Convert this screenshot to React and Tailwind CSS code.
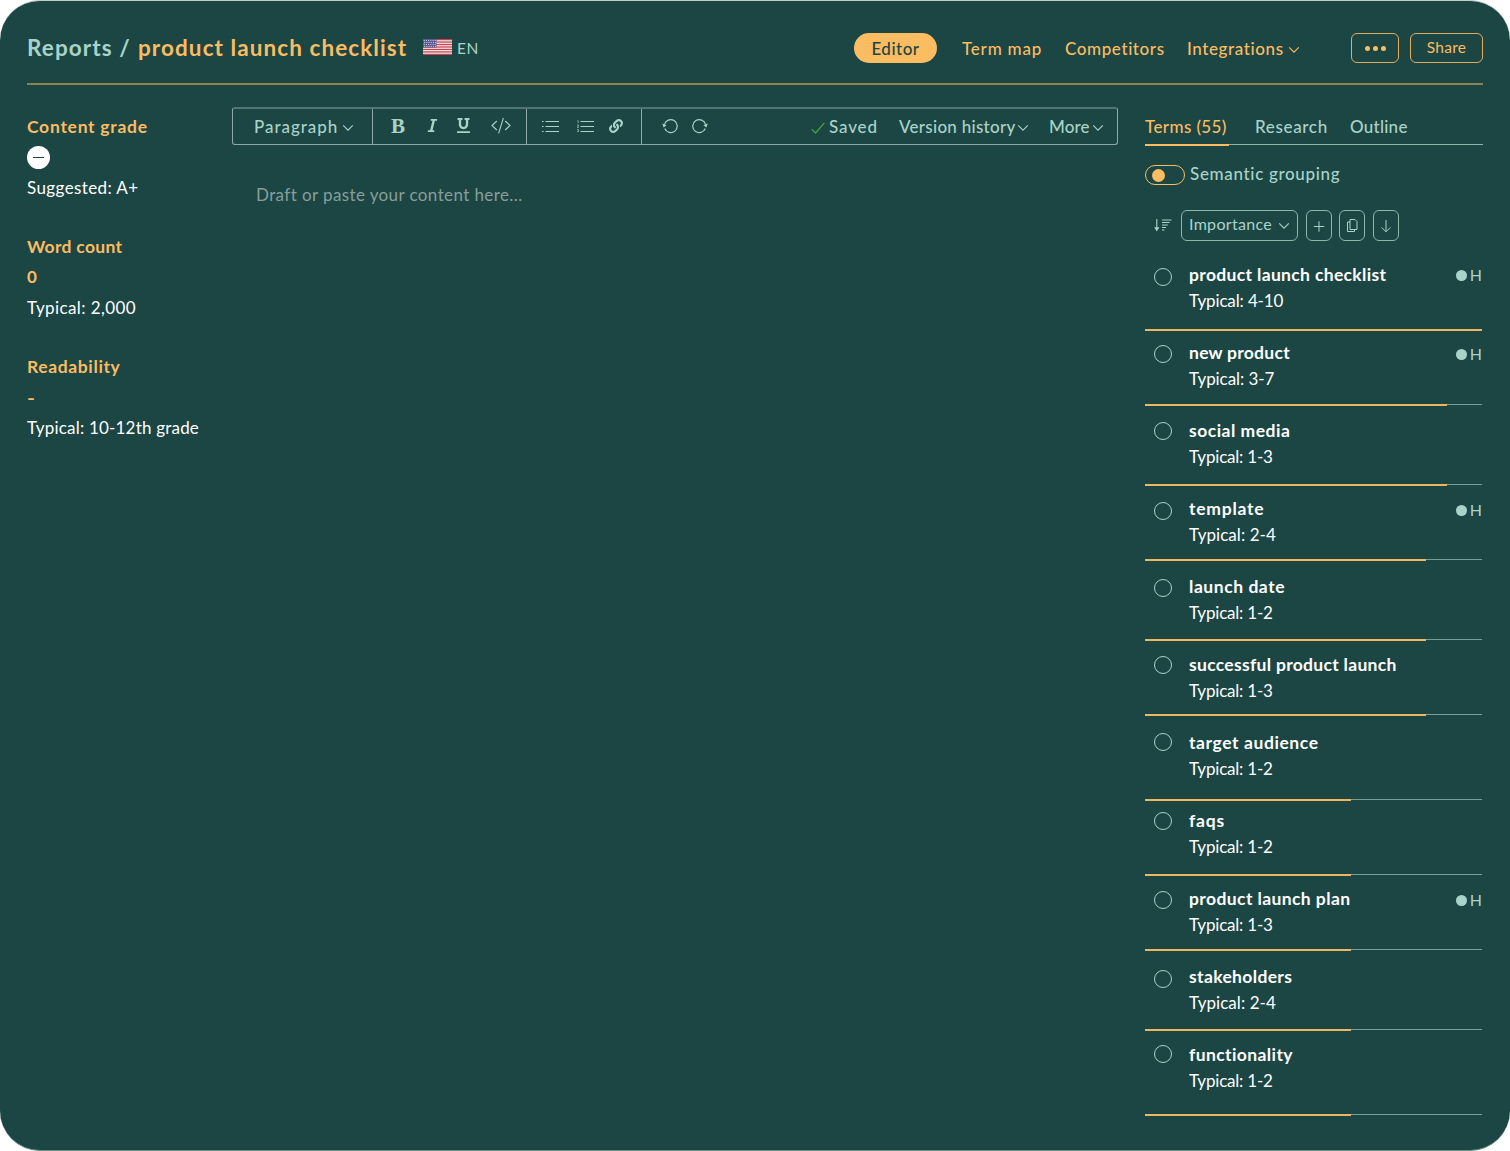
import React from "react";
import { FaItalic, FaUnderline, FaLink } from "react-icons/fa";

const TERMS = [
  { name: "product launch checklist", typical: "4-10", fill: 337, row: "h-[81px] pt-[12px]", dot: "mt-[6px]", title: "tracking-[0.34px]", range: "tracking-[-0.14px]", high: "mt-0" },
  { name: "new product", typical: "3-7", fill: 302, row: "h-[75px] pt-[9px]", dot: "mt-[5px]", title: "tracking-[0.26px]", range: "tracking-[-0.08px]", high: "mt-[1px]" },
  { name: "social media", typical: "1-3", fill: 302, row: "h-[80px] pt-[12px]", dot: "mt-[4px]", title: "tracking-[0.5px]", range: "tracking-[-0.2px]" },
  { name: "template", typical: "2-4", fill: 281, row: "h-[75px] pt-[10px]", dot: "mt-[6px]", title: "tracking-[0.75px]", range: "tracking-[0.06px]", high: "mt-[1px]" },
  { name: "launch date", typical: "1-2", fill: 281, row: "h-[80px] pt-[13px]", dot: "mt-[5px]", title: "tracking-[0.55px]", range: "tracking-[-0.2px]" },
  { name: "successful product launch", typical: "1-3", fill: 281, row: "h-[75px] pt-[11px]", dot: "mt-[4px]", title: "tracking-[0.3px]", range: "tracking-[-0.2px]" },
  { name: "target audience", typical: "1-2", fill: 206, row: "h-[85px] pt-[14px]", dot: "mt-[3px]", title: "tracking-[0.58px]", range: "tracking-[-0.2px]" },
  { name: "faqs", typical: "1-2", fill: 206, row: "h-[75px] pt-[7px]", dot: "mt-[4px]", title: "tracking-[0.8px]", range: "tracking-[-0.2px]" },
  { name: "product launch plan", typical: "1-3", fill: 206, row: "h-[75px] pt-[10px]", dot: "mt-[5px]", title: "tracking-[0.4px]", range: "tracking-[-0.2px]", high: "mt-[1px]" },
  { name: "stakeholders", typical: "2-4", fill: 206, row: "h-[80px] pt-[13px]", dot: "mt-[6px]", title: "tracking-[0.35px]", range: "tracking-[0.06px]" },
  { name: "functionality", typical: "1-2", fill: 206, row: "h-[85px] pt-[11px]", dot: "mt-[3px]", title: "tracking-[0.4px]", range: "tracking-[-0.2px]" },
];

function Chevron({ className = "" }) {
  return (
    <svg viewBox="0 0 12 8" className={"h-2 w-3 shrink-0 " + className} fill="none" stroke="currentColor" strokeWidth="1.1">
      <path d="M1.2 1.3 6 6.2l4.8-4.9" />
    </svg>
  );
}

function Flag() {
  const stripes = [0, 2, 4, 6, 8, 10, 12];
  return (
    <svg viewBox="0 0 29 16" className="mt-[-2px] ml-px h-4 w-[29px] shrink-0">
      <rect width="29" height="16" fill="#f3e9ea" />
      {stripes.map((i) => (
        <rect key={i} y={(i * 16) / 13} width="29" height={16 / 13} fill="#c9414f" />
      ))}
      <rect width="13.5" height="8.6" fill="#54548a" />
      {[1.3, 3.3, 5.3, 7.3].map((y, r) =>
        [1.2, 3.4, 5.6, 7.8, 10, 12.2].map((x) => (
          <circle key={x + "-" + y} cx={x + (r % 2) * 0.5} cy={y} r="0.65" fill="#d5d5e6" />
        ))
      )}
    </svg>
  );
}

function Header() {
  return (
    <header className="flex h-[82px] items-center pt-[12px] text-[17px] font-medium whitespace-nowrap text-[#fbbc62]">
      <h1 className="flex text-[22.5px] font-bold">
        <span className="w-[111px] tracking-[1.1px] text-[#a9d3c8]">Reports /</span>
        <span className="w-[284px] tracking-[1.08px]">product launch checklist</span>
      </h1>
      <Flag />
      <span className="ml-[5px] w-[397px] pt-[2px] text-[15.5px] font-normal tracking-[0.5px] text-[#a9d3c8]">EN</span>
      <span className="flex h-[30px] w-[83px] items-center justify-center rounded-full bg-[#fbbc62] pt-px tracking-[0.5px] text-[#1c4644]">
        Editor
      </span>
      <span className="ml-[25px] w-[103px] pt-[2px] tracking-[0.8px]">Term map</span>
      <span className="w-[122px] pt-[2px] tracking-[0.6px]">Competitors</span>
      <span className="w-[101px] pt-[2px] tracking-[0.6px]">Integrations</span>
      <Chevron className="mt-[4px]" />
      <button className="ml-[51px] flex h-[30px] w-[48px] items-center justify-center gap-[3px] rounded-[6px] border border-[#e0ad5c]">
        <i className="size-[5px] rounded-full bg-[#fbbc62]" />
        <i className="size-[5px] rounded-full bg-[#fbbc62]" />
        <i className="size-[5px] rounded-full bg-[#fbbc62]" />
      </button>
      <button className="ml-[11px] h-[30px] w-[73px] rounded-[6px] border border-[#e0ad5c] text-[15.5px] font-normal tracking-[0.3px]">
        Share
      </button>
    </header>
  );
}

function Stats() {
  return (
    <aside className="flex w-[205px] flex-col gap-[30px] pt-[27px] text-[17px] leading-[30px] whitespace-nowrap text-white">
      <section>
        <h2 className="text-[17.5px] font-bold tracking-[0.73px] text-[#fbbc62]">Content grade</h2>
        <div className="flex h-[30px] items-center">
          <span className="flex size-[23px] items-center justify-center rounded-full bg-white">
            <i className="h-px w-[11px] bg-[#1c4644]" />
          </span>
        </div>
        <p className="pt-px leading-[29px] tracking-[0.4px]">Suggested: A+</p>
      </section>
      <section>
        <h2 className="text-[17.5px] font-bold tracking-[0.3px] text-[#fbbc62]">Word count</h2>
        <p className="font-bold text-[#fbbc62]">0</p>
        <p className="pt-px leading-[29px] tracking-[0.39px]">Typical: 2,000</p>
      </section>
      <section>
        <h2 className="text-[17.5px] font-bold tracking-[0.62px] text-[#fbbc62]">Readability</h2>
        <p className="pt-px leading-[29px] font-bold text-[#fbbc62]">
          <span className="inline-block origin-left scale-x-125">-</span>
        </p>
        <p className="pt-px leading-[29px] tracking-[0.2px]">Typical: 10-12th grade</p>
      </section>
    </aside>
  );
}

function Toolbar() {
  return (
    <div className="flex h-[38px] rounded-[3px] border border-t-2 border-[#8fa9a6] border-t-[#547672] text-[17px] font-medium whitespace-nowrap text-[#a9d3c8]">
      <div className="flex w-[140px] items-center border-r border-[#8fa9a6] pl-[21px]">
        <span className="w-[88px] tracking-[0.95px]">Paragraph</span>
        <Chevron className="mt-[3px]" />
      </div>
      <div className="flex w-[154px] items-center border-r border-[#8fa9a6] pb-[2px] pl-[18px]">
        <span className="w-[16px] pt-px font-['Liberation_Serif',serif] text-[21px] leading-none font-bold">B</span>
        <FaItalic className="ml-[18px] size-[15px]" />
        <FaUnderline className="ml-[16px] size-[15px]" />
        <svg viewBox="0 0 20 17" className="ml-[20px] h-[17px] w-5" fill="none" stroke="currentColor" strokeWidth="1.1">
          <path d="M5.8 4 1 8.5 5.8 13M14.2 4 19 8.5 14.2 13M12.4.8 7.6 16.4" />
        </svg>
      </div>
      <div className="flex w-[115px] items-center border-r border-[#8fa9a6] pb-[2px] pl-[15px]">
        <svg viewBox="0 0 17 12" className="h-3 w-[17px]" fill="none" stroke="currentColor" strokeWidth="1">
          <path d="M0 1.5h1.6M0 6.5h1.6M0 11.5h1.6M3.5 1.5H17M3.5 6.5H17M3.5 11.5H17" />
        </svg>
        <svg viewBox="0 0 17 12" className="ml-[18px] h-3 w-[17px]" fill="none" stroke="currentColor" strokeWidth="1">
          <path d="M3.5 1.5H17M3.5 6.5H17M3.5 11.5H17" />
          <path d="M.4.7h.8v2.4M0 5h1.4v1L.2 7.4h1.6M0 9.6h1.5v2H0" strokeWidth=".7" />
        </svg>
        <FaLink className="ml-[15px] size-[14px]" />
      </div>
      <div className="flex flex-1 items-center pl-[20px]">
        <svg viewBox="0 0 16 16" className="mt-[-2px] size-4" fill="none" stroke="currentColor" strokeWidth="1.2">
          <path d="M2.4 6.6A6.5 6.5 0 1 1 2.7 10.6" />
          <path d="M.3 5.6 4.6 7.2 1.5 9.4z" fill="currentColor" stroke="none" />
        </svg>
        <svg viewBox="0 0 16 16" className="mt-[-2px] ml-[14px] size-4" fill="none" stroke="currentColor" strokeWidth="1.2">
          <path d="M13.6 6.6A6.5 6.5 0 1 0 13.3 10.6" />
          <path d="M15.7 5.6 11.4 7.2 14.5 9.4z" fill="currentColor" stroke="none" />
        </svg>
        <svg viewBox="0 0 14 12" className="mt-[2px] ml-[103px] h-3 w-[14px]" fill="none" stroke="#4da23c" strokeWidth="1.2">
          <path d="m.7 7.2 3.8 3.8L13.4.8" />
        </svg>
        <span className="ml-[4px] w-[70px] tracking-[0.85px]">Saved</span>
        <span className="w-[118px] tracking-[0.28px]">Version history</span>
        <Chevron className="mt-[3px]" />
        <span className="ml-[20px] w-[43px] tracking-[0.1px]">More</span>
        <Chevron className="mt-[3px]" />
      </div>
    </div>
  );
}

function IconButton({ className = "", children }) {
  return (
    <button className={"flex h-[31px] w-[26px] items-center justify-center rounded-[6px] border border-[#8cb5ac] " + className}>
      <svg viewBox="0 0 12 14" className="h-[14px] w-3" fill="none" stroke="currentColor" strokeWidth="1">
        {children}
      </svg>
    </button>
  );
}

function TermRow({ term }) {
  return (
    <li className={"flex flex-col justify-between " + term.row}>
      <div className="flex pl-[9px]">
        <i className={"size-[18px] shrink-0 rounded-full border border-[#a9d3c8] " + term.dot} />
        <div className="ml-[17px] flex-1 text-[17px] leading-[26px] whitespace-nowrap">
          <p className={"text-[17.5px] font-bold " + term.title}>{term.name}</p>
          <p className={"leading-[26px] " + term.range}>Typical: {term.typical}</p>
        </div>
        {term.high && (
          <span className={"flex h-[26px] items-center gap-[3px] text-[16px] text-[#a9d3c8] " + term.high}>
            <i className="size-[11px] rounded-full bg-[#a9d3c8]" />H
          </span>
        )}
      </div>
      <div className="flex h-[2px]">
        <i className="bg-[#f0b65f]" style={{ width: term.fill }} />
        <i className="h-px flex-1 bg-[#76a097]" />
      </div>
    </li>
  );
}

function TermsPanel() {
  return (
    <aside className="ml-[27px] w-[338px] font-normal text-white">
      <nav className="flex h-[61px] flex-col justify-end text-[17px] font-medium whitespace-nowrap text-[#a9d3c8]">
        <div className="flex h-[36px] items-center pt-[2px]">
          <span className="w-[110px] tracking-[0.4px] text-[#fbbc62]">Terms (55)</span>
          <span className="w-[95px] tracking-[0.65px]">Research</span>
          <span className="tracking-[0.25px]">Outline</span>
        </div>
        <div className="flex h-[2px]">
          <i className="w-[84px] bg-[#fbbc62]" />
          <i className="h-px flex-1 bg-[#8cb5ac]" />
        </div>
      </nav>
      <div className="mt-[19px] flex h-[20px] items-center">
        <span className="flex h-[20px] w-[40px] items-center rounded-full border border-[#fbbc62] pl-[6px]">
          <i className="size-[13px] rounded-full bg-[#fbbc62]" />
        </span>
        <span className="mt-[-3px] ml-[5px] text-[17px] font-medium tracking-[0.67px] text-[#a9d3c8]">Semantic grouping</span>
      </div>
      <div className="mt-[25px] flex h-[31px] items-center pl-[9px] text-[#a9d3c8]">
        <svg viewBox="0 0 18 13" className="h-[13px] w-[18px]" fill="none" stroke="currentColor" strokeWidth="1">
          <path d="M2.8 0v10" strokeWidth="1.1" />
          <path d="M.2 8.2 2.8 12.4l2.6-4.2z" fill="currentColor" stroke="none" />
          <path d="M8 1h9.5M8 3.5h7.6M8 6h5.8M8 8.5h4M8 11h2.5" />
        </svg>
        <button className="ml-[9px] flex h-[31px] w-[117px] items-center rounded-[6px] border border-[#8cb5ac] pb-[3px] pl-[7px] text-[16px] tracking-[0.3px]">
          <span className="w-[89px] text-left">Importance</span>
          <Chevron className="mt-[4px]" />
        </button>
        <IconButton className="ml-[8px]">
          <path d="M.8 7.5h10.4M6 2.3v10.4" />
        </IconButton>
        <IconButton className="ml-[7px]">
          <path d="M4 .5h5l2 2v8H4zM4 3H1.5v9.5h7V10.5" />
        </IconButton>
        <IconButton className="ml-[8px]">
          <path d="M6 1v11.5M1.6 8.4 6 12.8l4.4-4.4" />
        </IconButton>
      </div>
      <ul className="mt-[9px] w-[337px]">
        {TERMS.map((t) => (
          <TermRow key={t.name} term={t} />
        ))}
      </ul>
    </aside>
  );
}

export default function App() {
  return (
    <div className="h-[1151px] w-[1510px] bg-white font-['Lato',sans-serif]">
      <div className="h-full rounded-[40px] border-t border-b border-t-[#c0cecd] border-b-[#6f8e8b] bg-[#1c4644] px-[27px] antialiased">
        <Header />
        <div className="h-[2px] bg-[#8c8250]" />
        <div className="flex">
          <Stats />
          <main className="w-[886px] shrink-0 pt-[22px]">
            <Toolbar />
            <p className="mt-[37px] pl-[24px] text-[17px] leading-[26px] tracking-[0.4px] text-[#869f9b]">
              Draft or paste your content here...
            </p>
          </main>
          <TermsPanel />
        </div>
      </div>
    </div>
  );
}
